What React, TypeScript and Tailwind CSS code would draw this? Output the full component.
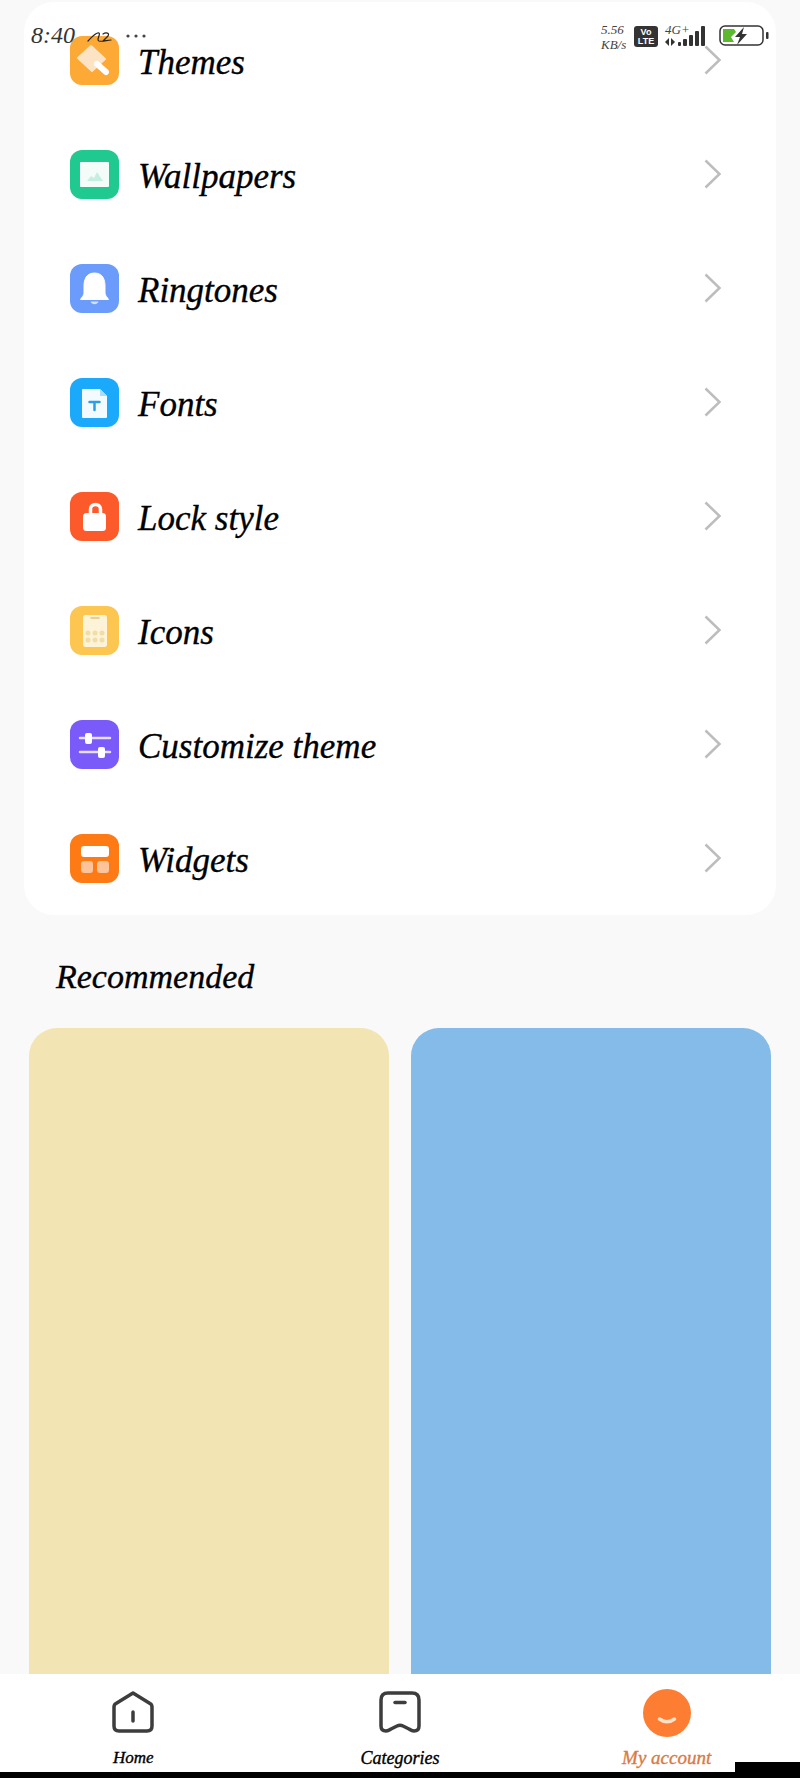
import type { ReactNode } from 'react'

const handFont = "[font-family:'Liberation_Serif',serif] italic [-webkit-text-stroke:0.35px]"

function Tile({ color, children }: { color: string; children: ReactNode }) {
  return (
    <svg viewBox="0 0 49 49" className="w-[49px] h-[49px] shrink-0">
      <rect width="49" height="49" rx="12" fill={color} />
      {children}
    </svg>
  )
}

const rows: { label: string; icon: ReactNode }[] = [
  {
    label: 'Themes',
    icon: (
      <Tile color="#fca935">
        <path d="M8 22 L21 10 L35 23 L22 35 Z" fill="#fbe3c4" stroke="#fbe3c4" strokeWidth="2" strokeLinejoin="round" />
        <path d="M27 28 L36 36" stroke="#fff" strokeWidth="6" strokeLinecap="round" />
      </Tile>
    ),
  },
  {
    label: 'Wallpapers',
    icon: (
      <Tile color="#1fc98f">
        <rect x="10" y="12" width="29" height="25" rx="1" fill="#f4fcf9" />
        <path d="M17 31 L21 26 L24 28 L27 22 L33 31 Z" fill="#c5f0e0" />
      </Tile>
    ),
  },
  {
    label: 'Ringtones',
    icon: (
      <Tile color="#6b9bfb">
        <path d="M24.500 9 C16 9 14 16 14 22 L14 29 C14 32 11.500 33 10.500 35.500 L38.500 35.500 C37.500 33 35 32 35 29 L35 22 C35 16 33 9 24.500 9 Z" fill="#fff" stroke="#fff" strokeLinejoin="round" />
        <path d="M20.500 37.500 C21.500 41 27.500 41 28.500 37.500 Z" fill="#cfdffd" />
      </Tile>
    ),
  },
  {
    label: 'Fonts',
    icon: (
      <Tile color="#1aa9fb">
        <path d="M12 12 Q12 11 13 11 L30 11 L37 18 L37 39 Q37 40 36 40 L13 40 Q12 40 12 39 Z" fill="#f4fbff" />
        <path d="M30 11 L37 18 L30 18 Z" fill="#a9dcfb" />
        <path d="M19.500 24 L29.500 24 M24.500 24 L24.500 32" stroke="#2a9fe6" strokeWidth="2.500" strokeLinecap="round" fill="none" />
      </Tile>
    ),
  },
  {
    label: 'Lock style',
    icon: (
      <Tile color="#fc5a2b">
        <path d="M20.500 22 L20.500 17 C20.500 11 30.500 11 30.500 17 L30.500 22" fill="none" stroke="#fff" strokeWidth="3.500" />
        <rect x="13" y="21" width="23" height="18" rx="3.500" fill="#fff" />
      </Tile>
    ),
  },
  {
    label: 'Icons',
    icon: (
      <Tile color="#fdc650">
        <rect x="13" y="9" width="24" height="32" rx="2.500" fill="#fdf3d8" />
        <path d="M21 12 L29 12" stroke="#e3c478" strokeWidth="1.500" strokeLinecap="round" />
        {[18, 25, 32].flatMap((x) =>
          [27, 34].map((y) => <circle key={`${x}-${y}`} cx={x} cy={y} r="2.500" fill="#f2dda6" />),
        )}
      </Tile>
    ),
  },
  {
    label: 'Customize theme',
    icon: (
      <Tile color="#7b5afa">
        <path d="M10 18 L40 18 M10 32 L40 32" stroke="#e6e0fe" strokeWidth="2.500" strokeLinecap="round" />
        <rect x="15" y="13" width="7" height="11" rx="2" fill="#fff" />
        <rect x="28" y="27" width="7" height="11" rx="2" fill="#fff" />
      </Tile>
    ),
  },
  {
    label: 'Widgets',
    icon: (
      <Tile color="#fe7a15">
        <rect x="11" y="12" width="28" height="11" rx="3" fill="#fff" />
        <rect x="11" y="27" width="12" height="12" rx="3" fill="#fdc39a" />
        <rect x="27" y="27" width="12" height="12" rx="3" fill="#fdc39a" />
      </Tile>
    ),
  },
]

function StatusBar() {
  return (
    <div className="absolute top-0 left-0 right-0 h-[60px] text-[#333]">
      <span className="absolute left-[31px] top-[21px] text-[24px] leading-[28px] [font-family:'Liberation_Serif',serif] italic">8:40</span>
      <svg viewBox="0 0 26 12" className="absolute left-[87px] top-[31px] w-[26px] h-[12px]">
        <path d="M1 10 C5 6 9 1 12 2 C14 3 9 9 12 10 C16 11 20 9 24 9 M16 3 C19 1 23 2 21 5 L16 10" fill="none" stroke="#222" strokeWidth="1.200" strokeLinecap="round" />
      </svg>
      <svg viewBox="0 0 20 4" className="absolute left-[126px] top-[34px] w-[20px] h-[4px]">
        <circle cx="2" cy="2" r="1.600" fill="#444" />
        <circle cx="10" cy="2" r="1.600" fill="#444" />
        <circle cx="18" cy="2" r="1.600" fill="#444" />
      </svg>
      <div className="absolute left-[601px] top-[22px] text-[13px] leading-[15px] text-[#444] [font-family:'Liberation_Serif',serif] italic">
        <div>5.56</div>
        <div>KB/s</div>
      </div>
      <div className="absolute left-[634px] top-[26px] w-[24px] h-[21px] rounded-[3px] bg-[#333] text-white text-[9px] leading-[9px] font-bold text-center pt-[2px] [font-family:'Liberation_Sans',sans-serif]">
        <div>Vo</div>
        <div>LTE</div>
      </div>
      <span className="absolute left-[665px] top-[22px] text-[13px] leading-[15px] text-[#444] [font-family:'Liberation_Serif',serif] italic">4G+</span>
      <svg viewBox="0 0 46 22" className="absolute left-[664px] top-[25px] w-[46px] h-[22px]">
        <path d="M1 17 L5 13 L5 21 Z M7 13 L7 21 L11 17 Z" fill="#333" />
        <rect x="14" y="17" width="3" height="4" rx="1" fill="#333" />
        <rect x="19" y="14" width="4" height="7" rx="1" fill="#333" />
        <rect x="25" y="10" width="4" height="11" rx="1" fill="#333" />
        <rect x="31" y="6" width="4" height="15" rx="1" fill="#333" />
        <rect x="37" y="1" width="4" height="20" rx="1" fill="#333" />
      </svg>
      <svg viewBox="0 0 50 22" className="absolute left-[719px] top-[25px] w-[50px] h-[22px]">
        <rect x="1" y="1" width="43" height="19" rx="5" fill="#fff" stroke="#333" strokeWidth="1.500" />
        <path d="M4 4 L15 4 L17 7 L12 12 L15 17 L4 17 Z" fill="#5cb82e" />
        <path d="M25 2 L16 12 L21 12 L18 20 L28 9 L23 9 Z" fill="#333" />
        <rect x="47" y="7" width="2.500" height="7" rx="1" fill="#333" />
      </svg>
    </div>
  )
}

export default function App() {
  return (
    <div className="relative flex flex-col h-screen overflow-hidden bg-[#f9f9f9]">
      <StatusBar />

      <main className="flex-1 min-h-0 flex flex-col pt-[2px]">
        {/* Menu card */}
        <div className="mx-[24px] pt-[1px] bg-white rounded-[30px]">
          {rows.map((row) => (
            <div key={row.label} className="flex items-center h-[114px] pl-[46px] pr-[54px]">
              {row.icon}
              <span className={`ml-[19px] mt-[6px] flex-1 text-[35px] leading-[40px] text-black ${handFont}`}>{row.label}</span>
              <svg viewBox="0 0 18 30" className="w-[18px] h-[30px]">
                <path d="M1.500 1.500 L15.500 15 L1.500 28.500" fill="none" stroke="#bdbdbd" strokeWidth="2.500" />
              </svg>
            </div>
          ))}
        </div>

        <h2 className={`ml-[56px] mt-[40px] text-[34px] leading-[44px] font-normal text-black ${handFont}`}>Recommended</h2>

        <div className="flex-1 min-h-0 mt-[29px] mx-[29px] grid grid-cols-2 gap-[22px]">
          <div className="bg-[#f2e4b3] rounded-t-[28px]" />
          <div className="bg-[#85bbe9] rounded-t-[28px]" />
        </div>
      </main>

      {/* Bottom navigation */}
      <nav className="relative h-[98px] shrink-0 grid grid-cols-3 bg-white">
        <div className="flex flex-col items-center pt-[17px]">
          <svg viewBox="0 0 42 42" className="w-[42px] h-[42px]">
            <path d="M21 2 L38 12.500 Q40 13.500 40 16 L40 35 Q40 40 35 40 L7 40 Q2 40 2 35 L2 16 Q2 13.500 4 12.500 Z" fill="none" stroke="#3d3d3d" strokeWidth="3.500" strokeLinejoin="round" />
            <path d="M21 21 L21 30" stroke="#3d3d3d" strokeWidth="3.500" strokeLinecap="round" />
          </svg>
          <span className={`mt-[13px] text-[17px] leading-[24px] text-black ${handFont}`}>Home</span>
        </div>
        <div className="flex flex-col items-center pt-[17px]">
          <svg viewBox="0 0 42 42" className="w-[42px] h-[42px]">
            <path d="M9 2 L33 2 Q40 2 40 9 L40 35 Q40 40 35 40 Q33 40 30 38 L24 35 Q21 33.500 18 35 L12 38 Q9 40 7 40 Q2 40 2 35 L2 9 Q2 2 9 2 Z" fill="none" stroke="#3d3d3d" strokeWidth="3.500" strokeLinejoin="round" />
            <path d="M16 11.500 L26 11.500" stroke="#3d3d3d" strokeWidth="3.500" strokeLinecap="round" />
          </svg>
          <span className={`mt-[13px] text-[18px] leading-[24px] text-black ${handFont}`}>Categories</span>
        </div>
        <div className="flex flex-col items-center pt-[15px]">
          <svg viewBox="0 0 48 48" className="w-[48px] h-[48px]">
            <circle cx="24" cy="24" r="24" fill="#fd7e33" />
            <path d="M16.500 30 Q24 35.500 31.500 30" fill="none" stroke="#fde0c8" strokeWidth="3.500" strokeLinecap="round" />
          </svg>
          <span className={`mt-[9px] text-[19px] leading-[24px] text-[#d97a45] ${handFont}`}>My account</span>
        </div>
        <div className="absolute right-0 bottom-0 w-[65px] h-[10px] bg-black" />
      </nav>
      <div className="h-[6px] shrink-0 bg-black" />
    </div>
  )
}
